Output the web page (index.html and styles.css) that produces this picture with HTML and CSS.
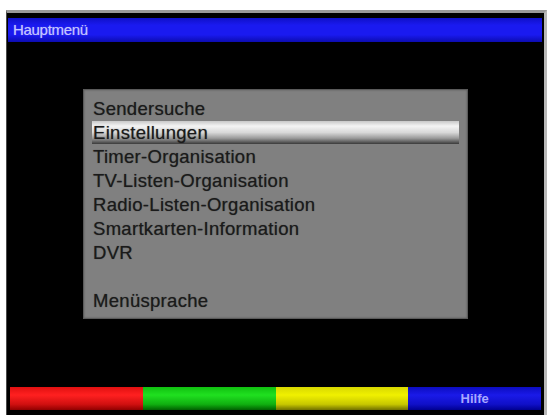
FILE: index.html
```html
<!DOCTYPE html>
<html lang="de">
<head>
<meta charset="utf-8">
<title>Hauptmenü</title>
<link rel="stylesheet" href="styles.css">
</head>
<body>
<div class="screen">
  <div class="titlebar">Hauptmenü</div>
  <div class="menu">
    <div class="item">Sendersuche</div>
    <div class="item selected">Einstellungen</div>
    <div class="item">Timer-Organisation</div>
    <div class="item">TV-Listen-Organisation</div>
    <div class="item">Radio-Listen-Organisation</div>
    <div class="item">Smartkarten-Information</div>
    <div class="item">DVR</div>
    <div class="item empty"></div>
    <div class="item">Menüsprache</div>
  </div>
  <div class="keys">
    <div class="key red"></div>
    <div class="key green"></div>
    <div class="key yellow"></div>
    <div class="key blue">Hilfe</div>
  </div>
</div>
</body>
</html>
```
FILE: styles.css
```css
html, body {
  margin: 0;
  padding: 0;
  background: #ffffff;
  width: 550px;
  height: 415px;
  overflow: hidden;
}
body {
  font-family: "Liberation Sans", Arial, sans-serif;
}
.screen {
  box-sizing: border-box;
  margin: 10px 3px 0 6px;
  width: 541px;
  height: 405px;
  background: #000;
  border-top: 3px solid #9a9a9a;
  border-left: 1px solid #4a4a4a;
  border-right: 3px solid #b8b8b8;
  display: flex;
  flex-direction: column;
}
.titlebar {
  margin: 5px 2px 0 1px;
  height: 24px;
  line-height: 24px;
  padding-left: 5px;
  background: linear-gradient(to bottom, #1010c8 0%, #1a1af0 30%, #1a1af0 70%, #0c0cb0 100%);
  color: #c4c4ff;
  font-size: 15px;
  letter-spacing: -0.3px;
  text-shadow: 0 0 1px rgba(200, 200, 255, 0.6);
}
.menu {
  margin: 47px 0 0 76px;
  width: 385px;
  height: 230px;
  box-sizing: border-box;
  padding: 7px 8px;
  background: #808080;
  border: 1px solid #5a5a5a;
  box-shadow: inset 0 0 2px #555;
}
.item {
  height: 24px;
  line-height: 24px;
  padding-left: 1px;
  font-size: 18.5px;
  letter-spacing: 0.3px;
  color: #1a1a1a;
  text-shadow: 0 0 1px rgba(0, 0, 0, 0.5);
  white-space: nowrap;
}
.item.selected {
  height: 23px;
  margin-bottom: 1px;
  line-height: 23px;
  background: linear-gradient(to bottom, #c8c8c8 0%, #f4f4f4 22%, #d8d8d8 50%, #9a9a9a 75%, #3a3a3a 100%);
}
.keys {
  margin: 68px 3px 0 3px;
  height: 23px;
  display: flex;
}
.key {
  flex: 1;
  text-align: center;
  line-height: 23px;
}
.red {
  background: linear-gradient(to bottom, #e01010 0%, #ff2020 35%, #d01010 75%, #900000 100%);
}
.green {
  background: linear-gradient(to bottom, #10c010 0%, #20e020 35%, #10b010 75%, #006000 100%);
}
.yellow {
  background: linear-gradient(to bottom, #d8d800 0%, #f0f000 35%, #c8c800 75%, #707000 100%);
}
.blue {
  background: linear-gradient(to bottom, #0c0cc0 0%, #1a1ae8 35%, #1010c8 75%, #000090 100%);
  color: #a8a8ff;
  font-size: 13px;
  font-weight: bold;
}
```
